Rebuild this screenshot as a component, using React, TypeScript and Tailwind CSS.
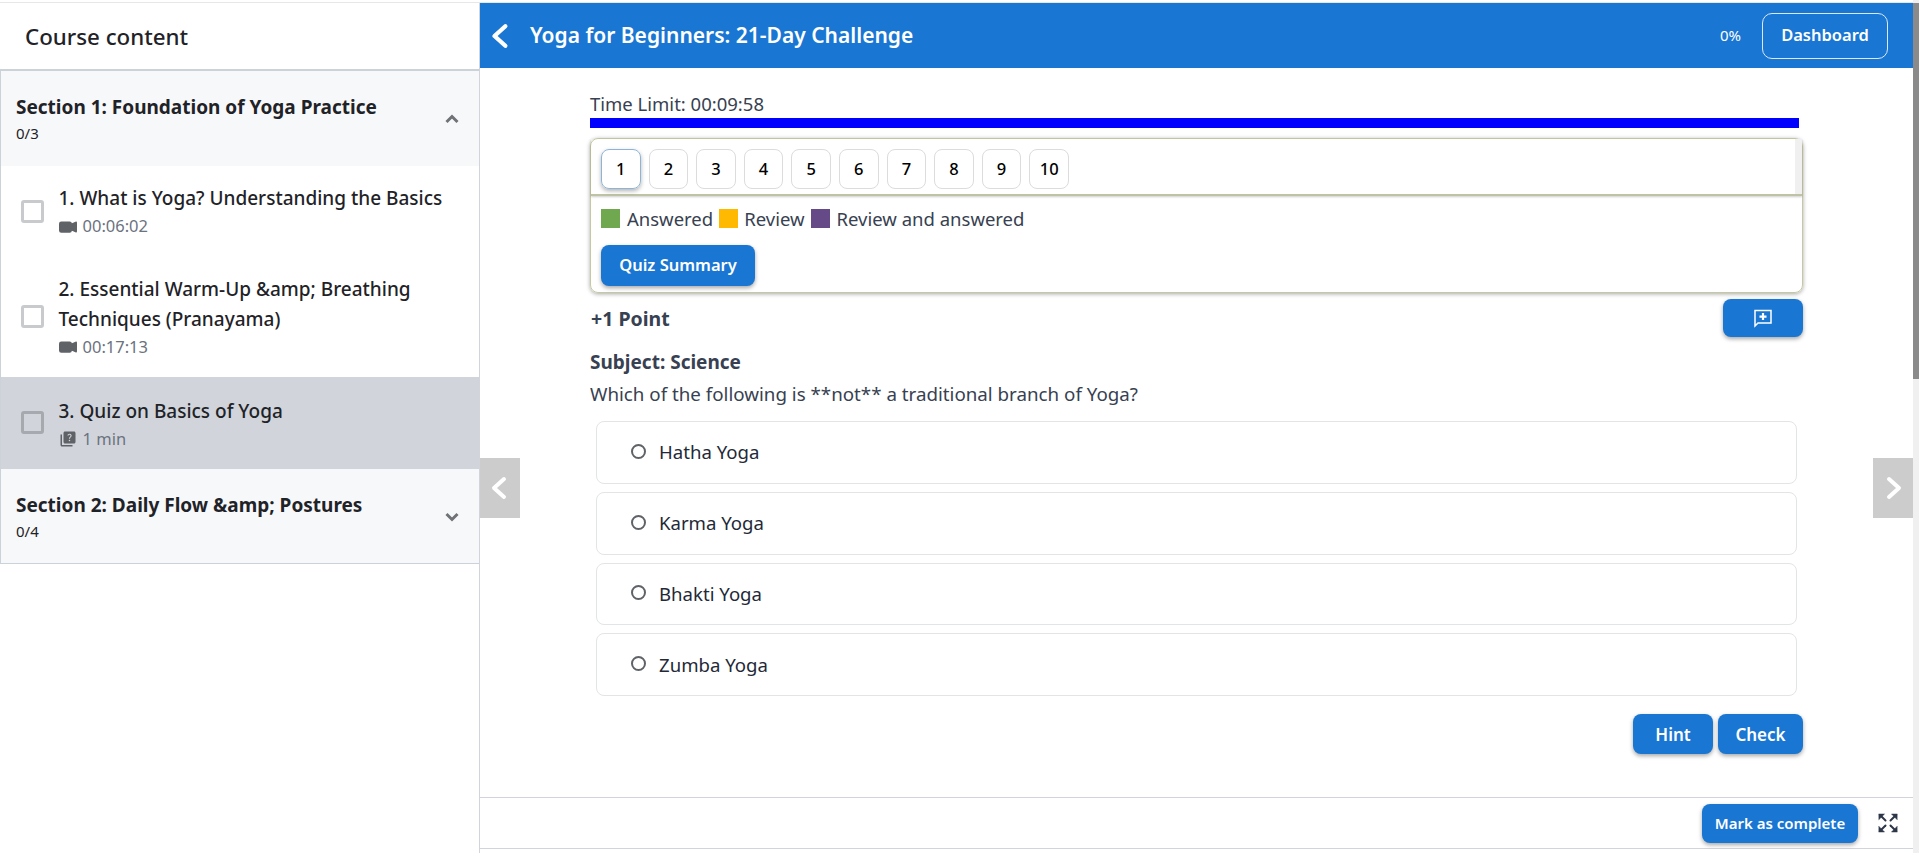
import { BsCameraVideoFill } from "react-icons/bs";
import { MdQuiz } from "react-icons/md";

const numbers = [1, 2, 3, 4, 5, 6, 7, 8, 9, 10];
const options = ["Hatha Yoga", "Karma Yoga", "Bhakti Yoga", "Zumba Yoga"];

const Arrow = ({ dir, size }: { dir: "left" | "right"; size: number }) => (
  <svg width={size} height={size} viewBox="0 0 24 24" fill="none" stroke="#fff" strokeWidth="4" strokeLinecap="round" strokeLinejoin="round">
    <path d={dir === "left" ? "M16 3 L6 12 L16 21" : "M8 3 L18 12 L8 21"} />
  </svg>
);

const Chevron = ({ up }: { up?: boolean }) => (
  <svg width="14" height="10" viewBox="0 0 14 10" fill="none" stroke="#6f7276" strokeWidth="3">
    <path d={up ? "M1.5 8 L7 2.5 L12.5 8" : "M1.5 2 L7 7.5 L12.5 2"} />
  </svg>
);

const FullscreenIcon = () => (
  <svg width="20" height="20" viewBox="0 0 20 20" fill="#2d3748" stroke="#2d3748" strokeWidth="2" strokeLinecap="round">
    <path d="M7.5 7.5 L2 2" />
    <path d="M12.5 7.5 L18 2" />
    <path d="M7.5 12.5 L2 18" />
    <path d="M12.5 12.5 L18 18" />
    <path d="M1 1 H6.5 L1 6.5 Z" strokeWidth="0.5" />
    <path d="M19 1 H13.5 L19 6.5 Z" strokeWidth="0.5" />
    <path d="M1 19 H6.5 L1 13.5 Z" strokeWidth="0.5" />
    <path d="M19 19 H13.5 L19 13.5 Z" strokeWidth="0.5" />
  </svg>
);

function Lesson({ title, meta, active, quiz }: { title: string[]; meta: string; active?: boolean; quiz?: boolean }) {
  return (
    <div className={`flex items-center pl-[19.5px] pr-3 ${active ? "bg-[#d1d5db] h-[92px]" : title.length > 1 ? "h-[120px]" : "h-[91px]"}`}>
      <span className={`w-[23px] h-[23px] rounded-[3px] border-[3px] shrink-0 -mt-[1px] ${active ? "border-[#a6a9ad]" : "border-[#c8cacd]"}`} />
      <div className={`ml-[15px] ${active ? "pt-[2px]" : ""}`}>
        {title.map((t) => (
          <div key={t} className="text-[19px] leading-[30px] font-medium text-[#1f2328] whitespace-nowrap">{t}</div>
        ))}
        <div className="flex items-center h-[27px] text-[16.5px] text-[#6b7280]">
          {quiz ? <MdQuiz size={18} className="text-[#5f6368] mr-[6px]" /> : <BsCameraVideoFill size={18} className="text-[#5f6368] mr-[6px]" />}
          {meta}
        </div>
      </div>
    </div>
  );
}

function Section({ title, count, open, className }: { title: string; count: string; open?: boolean; className: string }) {
  return (
    <div className={`bg-[#f7f8fa] flex items-center pl-[15px] pr-[20px] ${className}`}>
      <div className="flex-1 pt-[2px]">
        <div className="text-[19px] leading-[26px] font-bold text-[#1f2328]">{title}</div>
        <div className="text-[15px] leading-[26px] text-[#1f2328]">{count}</div>
      </div>
      <Chevron up={open} />
    </div>
  );
}

const btn = "bg-[#1976d2] text-white rounded-[8px] shadow-[0_2px_4px_rgba(0,0,0,0.35)] flex items-center justify-center font-semibold";

export default function App() {
  return (
    <div className="h-screen overflow-hidden bg-white flex font-['Noto_Sans',sans-serif] text-[#374151]">
      <div className="flex-1 min-w-0 flex flex-col">
        <div className="h-[3px] bg-white border-b border-[#e5e7eb] shrink-0" />
        <div className="flex flex-1 min-h-0">
          {/* SIDEBAR */}
          <aside className="w-[480px] shrink-0 border-r border-[#d1d5db]">
            <div className="h-[66px] pl-[25px] pt-[2px] flex items-center text-[22.3px] font-medium text-[#1f2328]">Course content</div>
            <div className="border border-t-[2px] border-r-0 border-[#cbd2da]">
              <Section title="Section 1: Foundation of Yoga Practice" count="0/3" open className="h-[95px]" />
              <Lesson title={["1. What is Yoga? Understanding the Basics"]} meta="00:06:02" />
              <Lesson title={["2. Essential Warm-Up &amp; Breathing", "Techniques (Pranayama)"]} meta="00:17:13" />
              <Lesson title={["3. Quiz on Basics of Yoga"]} meta="1 min" active quiz />
              <Section title={"Section 2: Daily Flow &amp; Postures"} count="0/4" className="h-[94px] pt-[2px]" />
            </div>
          </aside>

          {/* MAIN */}
          <main className="flex-1 min-w-0 flex flex-col relative">
            <header className="h-[65px] shrink-0 bg-[#1976d2] flex items-center pl-[8px] pr-[25px] text-white">
              <Arrow dir="left" size={26} />
              <h1 className="ml-[16px] text-[21px] font-semibold flex-1">Yoga for Beginners: 21-Day Challenge</h1>
              <span className="text-[15px] mr-[21px]">0%</span>
              <button className="w-[126px] h-[46px] rounded-[10px] border border-[#dbe9f7] text-[16.5px] font-semibold">Dashboard</button>
            </header>

            <div className="flex-1 min-h-0 pl-[110px] pr-[110px] pt-[25px]">
              <div className="text-[18.5px] leading-[22px]">Time Limit: 00:09:58</div>
              <div className="h-[10px] bg-[#0000ff] mt-[3px] mr-[4px]" />

              <div className="mt-[10px] h-[155px] border border-[#c5c9a0] rounded-[8px] shadow-[0_1px_4px_rgba(0,0,0,0.35)]">
                <div className="h-[57px] flex border-b-[2px] border-[#bfc2a4] shadow-[0_1px_2px_rgba(0,0,0,0.2)]">
                  <div className="flex-1 flex gap-[8px] pl-[10px] pt-[10px]">
                    {numbers.map((n) => (
                      <button
                        key={n}
                        className={`w-[39.6px] h-[40px] rounded-[8px] text-[16.5px] font-medium text-black border ${n === 1 ? "border-[#8db4d8] shadow-[0_2px_4px_rgba(0,0,0,0.3)]" : "border-[#dcdcdc]"}`}
                      >
                        {n}
                      </button>
                    ))}
                  </div>
                  <div className="w-[7px] bg-[#f0f0f0]" />
                </div>
                <div className="flex items-center mt-[13px] ml-[10px] text-[18.5px] h-[19px]">
                  <span className="w-[19px] h-[19px] bg-[#70a84f] mr-[7px]" />
                  <span className="mr-[6px]">Answered</span>
                  <span className="w-[19px] h-[19px] bg-[#ffb900] mr-[6px]" />
                  <span className="mr-[6px]">Review</span>
                  <span className="w-[19px] h-[19px] bg-[#654a87] mr-[7px]" />
                  <span>Review and answered</span>
                </div>
                <button className={`${btn} mt-[17px] ml-[10px] w-[154px] h-[41px] text-[16.5px]`}>Quiz Summary</button>
              </div>

              <div className="flex items-center justify-between mt-[6px] h-[38px]">
                <span className="ml-[1px] pt-[2px] text-[19.5px] font-bold">+1 Point</span>
                <button className={`${btn} w-[80px] h-[38px]`}>
                  <svg width="20" height="20" viewBox="0 0 20 20" fill="none">
                    <path d="M2 2.5 H18 V15 H5 L2 18 Z" stroke="#fff" strokeWidth="1.5" strokeLinejoin="miter" />
                    <path d="M10 5 V12 M6.5 8.7 H13.5" stroke="#fff" strokeWidth="2.2" />
                  </svg>
                </button>
              </div>

              <div className="mt-[13px] text-[19px] leading-[25px] font-bold">Subject: Science</div>
              <div className="mt-[6px] text-[18.75px] leading-[25px]">Which of the following is **not** a traditional branch of Yoga?</div>

              <div className="mt-[15px] ml-[6px] mr-[6px] flex flex-col gap-[8px]">
                {options.map((o) => (
                  <div key={o} className="h-[62.75px] rounded-[8px] border border-[#e3e4e6] flex items-center pl-[34px]">
                    <span className="w-[15px] h-[15px] rounded-full border-[2px] border-[#5f6368] -mt-[2px]" />
                    <span className="ml-[13px] text-[18.6px] text-[#1f2937]">{o}</span>
                  </div>
                ))}
              </div>

              <div className="flex justify-end gap-[5px] mt-[18px]">
                <button className={`${btn} w-[80px] h-[40px] text-[17px] font-medium pt-[1px]`}>Hint</button>
                <button className={`${btn} w-[85px] h-[40px] text-[17px] font-medium pt-[1px]`}>Check</button>
              </div>
            </div>

            <footer className="h-[52px] shrink-0 border-t border-b border-[#d1d5db] mb-[4px] flex items-center justify-end pr-[15px]">
              <button className={`${btn} w-[156px] h-[39px] text-[15px]`}>Mark as complete</button>
              <span className="ml-[20px]"><FullscreenIcon /></span>
            </footer>

            {/* prev / next arrows sit over the content */}
            <button className="absolute left-0 top-[455px] w-[40px] h-[60px] bg-[#cccccc] flex items-center justify-center">
              <Arrow dir="left" size={24} />
            </button>
            <button className="absolute right-0 top-[455px] w-[40px] h-[60px] bg-[#cccccc] flex items-center justify-center">
              <Arrow dir="right" size={24} />
            </button>
          </main>
        </div>
      </div>

      {/* page scrollbar */}
      <div className="w-[6px] shrink-0 bg-[#f0f0f0]">
        <div className="h-[376px] mt-[3px] bg-[#8a8a8a]" />
      </div>
    </div>
  );
}
